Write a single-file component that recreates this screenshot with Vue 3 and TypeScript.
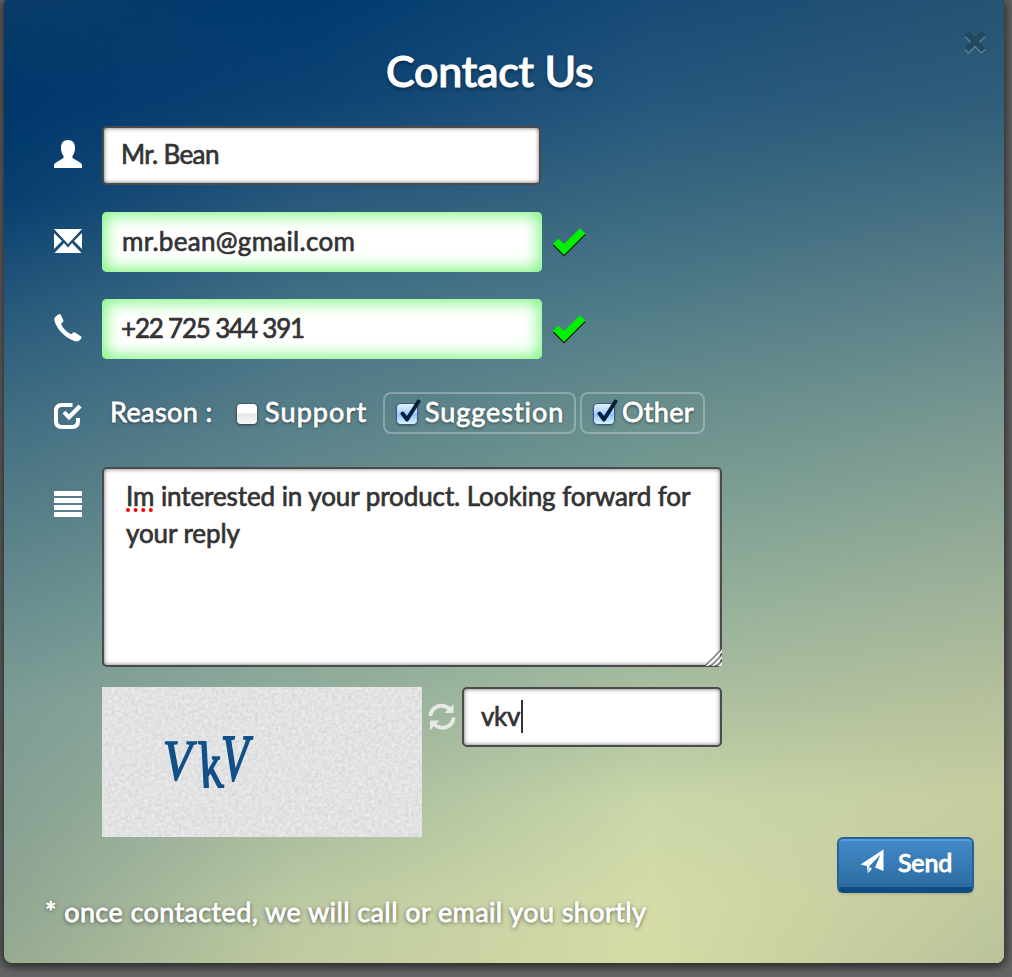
<script setup lang="ts">
import { ref } from 'vue'

interface Reason {
  label: string
  checked: boolean
  name: string
}

const fields = [
  { icon: 'user', name: 'name', value: 'Mr. Bean', valid: false },
  { icon: 'mail', name: 'email', value: 'mr.bean@gmail.com', valid: true },
  { icon: 'phone', name: 'tel', value: '+22 725 344 391', valid: true },
]

const reasons = ref<Reason[]>([
  { label: 'Support', checked: false, name: 'support' },
  { label: 'Suggestion', checked: true, name: 'suggestion' },
  { label: 'Other', checked: true, name: 'other' },
])
</script>

<template>
  <div class="panel">
    <div class="wash wash-a"></div>
    <div class="wash wash-b"></div>
    <div class="wash wash-c"></div>

    <button class="close" type="button" aria-label="Close">
      <svg width="24" height="25" viewBox="0 0 24 25">
        <path class="close-light" d="M5.500 2 12 8.500 18.500 2 22.500 6 16 12.500 22.500 19 18.500 23 12 16.500 5.500 23 1.500 19 8 12.500 1.500 6z" />
        <path class="close-dark" d="M5.500 0 12 6.500 18.500 0 22.500 4 16 10.500 22.500 17 18.500 21 12 14.500 5.500 21 1.500 17 8 10.500 1.500 4z" />
      </svg>
    </button>

    <form class="form" @submit.prevent>
      <h1 class="title"><span>Contact Us</span></h1>

      <div v-for="f in fields" :key="f.name" class="row field-row" :class="'row-' + f.name">
        <div class="icon">
          <svg v-if="f.icon === 'user'" width="28" height="28" viewBox="0 0 28 28">
            <path fill="#fff" d="M14 0C18.6 0 21 3.1 21 7.5C21.2 11 20.2 13.8 18.5 15.8V18L26.5 22.7Q28 23.7 28 25.4V28H0V25.4Q0 23.7 1.6 22.7L9.5 18V15.8C7.8 13.8 6.8 11 7 7.5C7 3.1 9.4 0 14 0Z" />
          </svg>
          <svg v-else-if="f.icon === 'mail'" width="28" height="24" viewBox="0 0 28 24">
            <path fill="#fff" d="M0 0H28L16.4 12.5 14 15.2 11.6 12.5ZM0 4 8 12 0 20ZM28 4V20L20 12ZM10 14 14 18.500 18 14 27.500 24H.500Z" />
          </svg>
          <svg v-else width="28" height="28" viewBox="0 0 28 28">
            <path fill="#fff" d="M4.6.4C5.7-.2 6.4.2 6.9 1L9.3 6.3C9.7 7.2 9.3 7.8 8.5 8.5L7 9.8C8.6 14 13 18.4 17.5 20.3L18.9 18.8C19.6 18.1 20.2 18 21 18.5L26.8 22.2C27.8 22.8 27.9 23.5 27.2 24.5C25.4 27.2 22.7 28 19.8 26.8C10.7 23.3 3.2 15.7.5 7C-.4 4.2 1.4 1.9 4.6.4Z" />
          </svg>
        </div>
        <div class="input" :class="{ valid: f.valid }" role="textbox"><span>{{ f.value }}</span></div>
        <svg v-if="f.valid" class="tick" width="34" height="30" viewBox="0 0 34 30">
          <path fill="#111" d="M1 17.500 12 28.500 33.500 7 28.500 2 12 18.500 6 12.500z" />
          <path fill="#00f000" d="M1 15.700 6.300 10.400 12 16 28 .200 33.500 5.500 12 27z" />
        </svg>
      </div>

      <div class="row reasons">
        <div class="icon">
          <svg width="28" height="26" viewBox="0 0 28 26">
            <path fill="none" stroke="#fff" stroke-width="4" d="M18.500 2H8Q2 2 2 8V18Q2 24 8 24H18Q24 24 24 18V15" />
            <path fill="#fff" d="M8.500 10.500 11.500 7.700 15 11.200 24.500 1.500 27.600 4.500 15 17.300Z" />
          </svg>
        </div>
        <span class="reason-label">Reason :</span>
        <label v-for="r in reasons" :key="r.name" class="reason" :class="[r.name, { on: r.checked }]">
          <span class="box">
            <svg v-if="r.checked" class="mark" width="24" height="24" viewBox="0 0 24 24">
              <path fill="none" stroke="#05203f" stroke-width="4" stroke-linejoin="round" stroke-linecap="round" d="M4.500 14.500 9 20.500 20.500 2.500" />
            </svg>
          </span>
          <span class="reason-text">{{ r.label }}</span>
        </label>
      </div>

      <div class="row message-row">
        <div class="icon">
          <svg width="28" height="26" viewBox="0 0 28 26">
            <path fill="#fff" d="M0 0h28v5H0zM0 7h28v5H0zM0 14h28v5H0zM0 21h28v5H0z" />
          </svg>
        </div>
        <div class="input textarea" role="textbox">
          <div class="line line-1">
            <span class="typo">Im<svg class="dots" width="28" height="4" viewBox="0 0 28 4"><path stroke="#f00" stroke-width="4" stroke-linecap="round" stroke-dasharray="0 7.600" d="M2 2H27" /></svg></span> interested in your product. Looking forward for
          </div>
          <div class="line line-2">your reply</div>
          <svg class="grip" width="17" height="17" viewBox="0 0 17 17">
            <path stroke="#fff" stroke-width="2" d="M1 18 18 1M7 18 18 7M13 18 18 13" />
            <path stroke="#777" stroke-width="1.500" d="M0 17 17 0M6 17 17 6M12 17 17 12" />
          </svg>
        </div>
      </div>

      <div class="row captcha-row">
        <div class="captcha">
          <svg class="paper" width="320" height="150">
            <filter id="grain" x="0" y="0" width="100%" height="100%" color-interpolation-filters="sRGB">
              <feTurbulence type="fractalNoise" baseFrequency="0.3" numOctaves="2" seed="4" />
              <feColorMatrix values="0.13 0 0 0 0.82  0.13 0 0 0 0.822  0.13 0 0 0 0.825  0 0 0 0 1" />
            </filter>
            <rect width="320" height="150" filter="url(#grain)" />
          </svg>
          <div class="code"><span class="v1">V</span><span class="k">k</span><span class="v2">V</span></div>
        </div>
        <svg class="refresh" width="28" height="28" viewBox="0 0 28 28">
          <g fill="#e6e9e6">
            <path d="M.5 13C1 5.500 7 .500 14 .800C17.200.900 20 2.200 22.200 4.200L25.500 1V10H16.500L19.600 6.800C14 2.500 5.500 5 4.200 13Z" />
            <path d="M27.500 14.500C27 22 21 27 14 26.700C10.800 26.600 8 25.300 5.800 23.300L2 27.500V17.500H11.500L8.400 20.700C14 25 22.500 22.500 23.800 14.500Z" />
          </g>
        </svg>
        <div class="input captcha-input" role="textbox"><span>vkv</span><i class="caret"></i></div>
      </div>

      <div class="actions">
        <button class="send" type="submit">
          <svg width="24" height="25" viewBox="0 0 24 25">
            <path fill="#fff" d="M23.500.500V22L15 18.500 20.500 5.500 9 17.500 8 24.500 6.800 17 .500 15.500Z" />
            <path fill="#fff" d="M8 24.500 12 19.500 9.500 18Z" />
          </svg>
          <span>Send</span>
        </button>
      </div>
      <p class="note">* once contacted, we will call or email you shortly</p>
    </form>
  </div>
</template>

<style>
html,
body {
  margin: 0;
  height: 977px;
  overflow: hidden;
  background: #646464;
}
</style>

<style scoped>
.panel {
  position: relative;
  box-sizing: border-box;
  width: 1000px;
  height: 963px;
  margin-left: 4px;
  border-radius: 3px 3px 8px 8px;
  font-family: Lato, "Open Sans", sans-serif;
  color: #fff;
  box-shadow: 0 2px 10px 2px rgba(0, 0, 0, 0.6);
  background: linear-gradient(#0a3c68 0, #00376c 100px, #083f70 200px, #24587b 300px, #3e6b82 400px, #537c87 500px, #678d8f 600px, #7d9c96 700px, #86a094 800px, #8fa693 900px, #98ab92 963px);
}
.wash {
  position: absolute;
  inset: 0;
  border-radius: 3px 3px 8px 8px;
}
.wash-a {
  background: linear-gradient(#003a70 0, #0c4273 100px, #29597c 200px, #417085 300px, #557d89 400px, #658c8d 500px, #7d9f95 600px, #93ae9c 700px, #a6ba9e 800px, #bccaa3 900px, #c0cba0 963px);
  mask-image: linear-gradient(90deg, transparent 0, #000 300px);
}
.wash-b {
  background: linear-gradient(#174b76 0, #25587d 100px, #396880 200px, #4f7b88 300px, #678d8c 400px, #7b9e94 500px, #93b09b 600px, #abbfa0 700px, #c9d7a9 800px, #d5dca8 900px, #d6dca6 963px);
  mask-image: linear-gradient(90deg, transparent 300px, #000 650px);
}
.wash-c {
  background: linear-gradient(#275373 0, #305d7a 100px, #467082 200px, #5f8289 300px, #769591 400px, #8ba595 500px, #a1b399 600px, #b6c19c 700px, #c6cda0 800px, #bfc89d 900px, #b9c29a 963px);
  mask-image: linear-gradient(90deg, transparent 650px, #000 1000px);
}
.close {
  position: absolute;
  z-index: 2;
  top: 31px;
  right: 17px;
  padding: 0;
  border: 0;
  background: none;
  line-height: 0;
}
.close-light {
  fill: #5a8299;
}
.close-dark {
  fill: #23485f;
}
.form {
  position: relative;
  display: flex;
  flex-direction: column;
  padding-left: 42px;
}
.title {
  margin: 46px 0 0;
  height: 80px;
  padding-left: 340px;
  font-size: 43px;
  line-height: 50px;
  font-weight: 500;
  letter-spacing: -0.25px;
  -webkit-text-stroke: 1.1px #fff;
  text-shadow: 0 2px 4px rgba(0, 0, 0, 0.5);
}
.row {
  display: flex;
  align-items: flex-start;
}
.icon {
  display: flex;
  width: 28px;
  margin: 0 20px 0 8px;
  justify-content: center;
}
.field-row {
  height: 87px;
}
.row-name {
  height: 86px;
}
.row-name .icon {
  padding-top: 14px;
}
.row-email .icon {
  padding-top: 17px;
}
.row-tel .icon {
  padding-top: 15px;
}
.input {
  box-sizing: border-box;
  width: 440px;
  height: 60px;
  padding: 0 18px;
  border: 2px solid #4b4b4b;
  border-radius: 5px;
  background: #fff;
  box-shadow: inset 0 0 4px rgba(0, 0, 0, 0.6);
  color: #333;
  font-size: 26px;
  line-height: 54px;
  white-space: nowrap;
  -webkit-text-stroke: 0.7px #333;
}
.row-name .input {
  width: 439px;
  height: 59px;
  padding-left: 17px;
  line-height: 52px;
  letter-spacing: -0.65px;
}
.input.valid {
  border: 0;
  padding: 0 20px;
  line-height: 58px;
  letter-spacing: 0.3px;
  box-shadow: inset 0 0 16px 3px #79f57b;
}
.row-tel .input.valid {
  padding-left: 19px;
  letter-spacing: -1.2px;
}
.tick {
  margin: 16px 0 0 10px;
}
.reasons {
  height: 75px;
  padding-top: 6px;
  font-size: 27px;
  text-shadow: 0 1px 3px rgba(0, 0, 0, 0.7);
  -webkit-text-stroke: 0.8px #fff;
}
.reasons .icon {
  padding-top: 11px;
}
.reason-label {
  width: 117px;
  padding-left: 8px;
  line-height: 40px;
  letter-spacing: 0.4px;
  white-space: nowrap;
}
.reason {
  box-sizing: border-box;
  display: flex;
  height: 42px;
  padding-left: 9px;
  border: 2px solid transparent;
  border-radius: 8px;
  line-height: 36px;
}
.reason.on {
  border-color: rgba(255, 255, 255, 0.28);
}
.support {
  width: 156px;
  padding-left: 8px;
  letter-spacing: 1.1px;
}
.suggestion {
  width: 193px;
  padding-left: 12px;
  margin-right: 4px;
  letter-spacing: 0.95px;
}
.other {
  width: 125px;
  padding-left: 12px;
  letter-spacing: 0.3px;
}
.box {
  position: relative;
  flex: none;
  width: 20px;
  height: 20px;
  margin: 10px 8px 0 0;
  border-radius: 4px;
  background: linear-gradient(#fff 45%, #e8e8e8 50%, #f6f6f6);
  box-shadow: 0 0 0 1px rgba(70, 80, 90, 0.6), 0 1px 3px rgba(0, 0, 0, 0.5);
}
.on .box {
  background: linear-gradient(#e3f0ff, #a6d0ff 48%, #8fc4fb 52%, #d6f3ff);
  box-shadow: 0 0 0 1px #3e5c80, 0 1px 3px rgba(0, 0, 0, 0.5);
}
.mark {
  position: absolute;
  left: 1px;
  top: -5px;
}
.message-row {
  height: 220px;
}
.message-row .icon {
  padding-top: 24px;
}
.textarea {
  position: relative;
  width: 620px;
  height: 200px;
  padding: 9px 22px;
  letter-spacing: -0.08px;
}
.line {
  height: 37px;
  line-height: 37px;
}
.typo {
  position: relative;
}
.dots {
  position: absolute;
  left: 0;
  bottom: 0;
}
.grip {
  position: absolute;
  right: -2px;
  bottom: -1px;
}
.captcha-row {
  padding-left: 56px;
}
.captcha {
  position: relative;
  width: 320px;
  height: 150px;
}
.paper {
  display: block;
}
.code {
  position: absolute;
  left: 65px;
  top: 37px;
  display: flex;
  color: #115088;
  font: italic 50px/68px "Liberation Serif", serif;
  -webkit-text-stroke: 1.5px #115088;
}
.code span {
  display: block;
  transform-origin: 0 50%;
}
.v1 {
  width: 31px;
  transform: translate(-4px, 2px) scale(0.95, 1.15);
}
.k {
  width: 23px;
  transform: translate(1px, 7px) scale(0.95, 1.3) skewX(14deg);
}
.v2 {
  transform: scale(0.9, 1.3);
}
.refresh {
  margin: 16px 6px 0;
}
.captcha-input {
  width: 260px;
  padding: 0 17px;
  display: flex;
  letter-spacing: -0.3px;
}
.caret {
  width: 2px;
  height: 33px;
  margin: 11px 0 0 1px;
  background: #333;
}
.actions {
  display: flex;
  justify-content: flex-end;
  padding-right: 30px;
}
.send {
  box-sizing: border-box;
  display: flex;
  align-items: flex-start;
  width: 137px;
  height: 56px;
  padding: 10px 0 0 21px;
  border: 2px solid #276299;
  border-bottom: 6px solid #0e4c82;
  border-radius: 6px;
  background: linear-gradient(#428bca, #2d6ca2);
  box-shadow: inset 0 2px 0 #5c9cd4, 0 2px 2px rgba(0, 0, 0, 0.1);
  color: #fff;
  font: 500 25px/27px Lato, sans-serif;
  letter-spacing: -0.2px;
  -webkit-text-stroke: 0.9px #fff;
  text-shadow: 0 -1px 1px #22598c;
}
.send svg {
  margin-right: 14px;
}
.note {
  margin: 0 0 0 -1px;
  line-height: 38px;
  font-size: 27px;
  letter-spacing: 0.4px;
  white-space: nowrap;
  text-shadow: 0 1px 4px rgba(0, 0, 0, 0.7);
  -webkit-text-stroke: 0.8px #fff;
}
</style>
